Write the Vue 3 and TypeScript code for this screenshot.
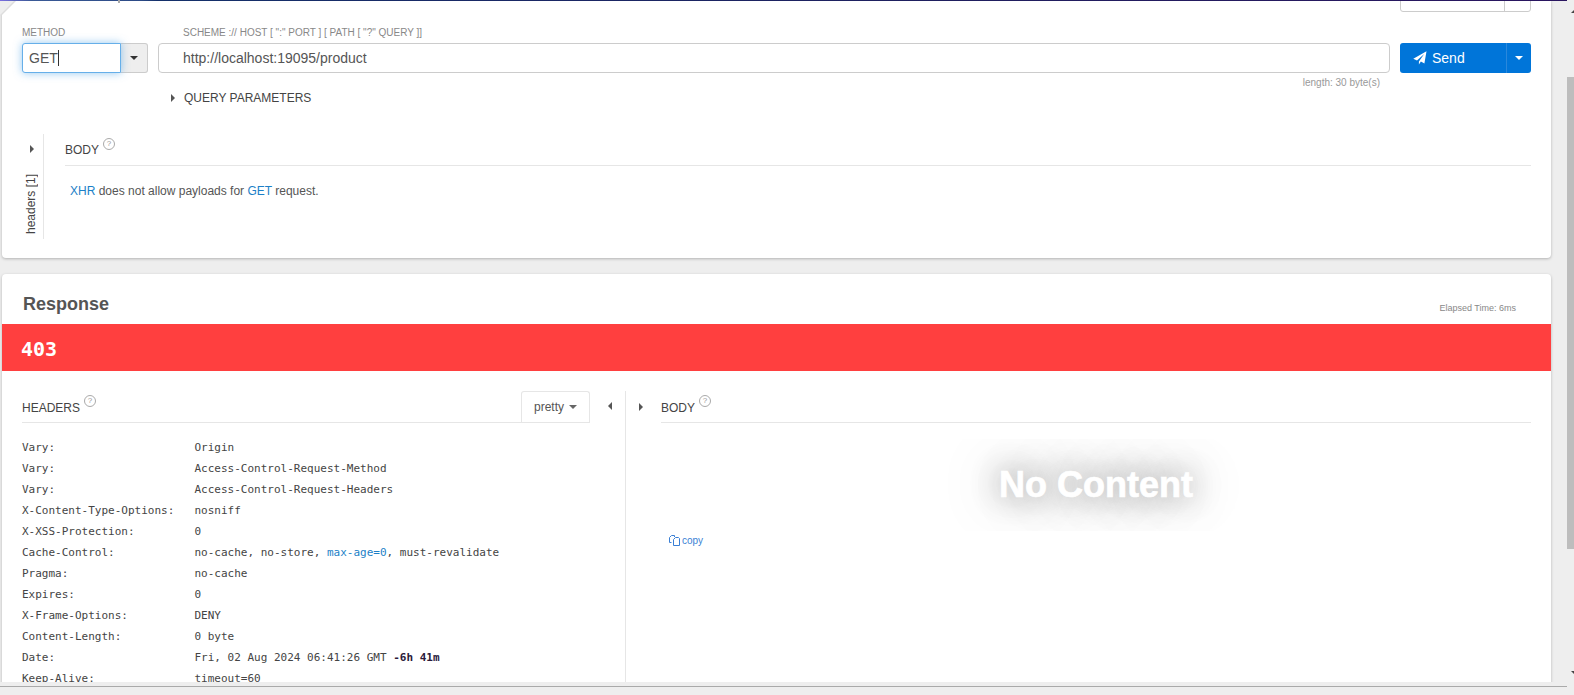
<script setup lang="ts">
interface Row { k: string; v: string }
const rows: Row[] = [
  { k: 'Vary:', v: 'Origin' },
  { k: 'Vary:', v: 'Access-Control-Request-Method' },
  { k: 'Vary:', v: 'Access-Control-Request-Headers' },
  { k: 'X-Content-Type-Options:', v: 'nosniff' },
  { k: 'X-XSS-Protection:', v: '0' },
  { k: 'Cache-Control:', v: 'cache' },
  { k: 'Pragma:', v: 'no-cache' },
  { k: 'Expires:', v: '0' },
  { k: 'X-Frame-Options:', v: 'DENY' },
  { k: 'Content-Length:', v: '0 byte' },
  { k: 'Date:', v: 'date' },
  { k: 'Keep-Alive:', v: 'timeout=60' },
]
</script>

<template>
  <div class="page">
    <div class="topline"><i class="tick"></i></div>
    <main class="stack">
      <section class="card request">
        <svg class="fold" width="18" height="18" viewBox="0 0 18 18"><path d="M0 0H16L0 16Z" fill="#eee"/><path d="M0.5 15.5 15.5 0.5" stroke="#ddd" stroke-width="1.5" fill="none"/></svg>
        <div class="saveas">
          <span class="save-main">Save as</span>
          <span class="save-side"></span>
        </div>
        <div class="url-row">
          <div class="method">
            <label class="lbl">METHOD</label>
            <div class="method-ctl">
              <div class="method-input">GET<i class="cursor"></i></div>
              <div class="method-btn"><i class="tri-down"></i></div>
            </div>
          </div>
          <div class="url">
            <label class="lbl url-lbl">SCHEME :// HOST [ ":" PORT ] [ PATH [ "?" QUERY ]]</label>
            <div class="url-input">http://localhost:19095/product</div>
            <div class="length">length: 30 byte(s)</div>
          </div>
          <div class="send">
            <div class="send-main">
              <svg class="plane" width="14" height="14" viewBox="0 0 14 14"><path d="M13.5.3 11.4 12.4 7.9 10.6 5.9 13.5V10.4L11.2 3 4 9.5.3 7.7Z" fill="#fff"/></svg>
              Send
            </div>
            <div class="send-side"><i class="tri-down white"></i></div>
          </div>
        </div>
        <div class="query"><i class="tri-right"></i>QUERY PARAMETERS</div>
        <div class="req-body">
          <div class="rail">
            <i class="tri-right big"></i>
            <span class="rail-text">headers [1]</span>
          </div>
          <div class="req-main">
            <div class="sec-title req-title">BODY<span class="help">?</span></div>
            <p class="xhr"><span class="blue">XHR</span> does not allow payloads for <span class="blue">GET</span> request.</p>
          </div>
        </div>
      </section>

      <section class="card response">
        <div class="res-head">
          <h2>Response</h2>
          <span class="elapsed">Elapsed Time: 6ms</span>
        </div>
        <div class="status">403</div>
        <div class="res-cols">
          <div class="res-left">
            <div class="left-head">
              <div class="sec-title low">HEADERS<span class="help">?</span></div>
              <div class="pretty">pretty<i class="tri-down gray"></i></div>
            </div>
            <div class="hrows">
              <div v-for="(r, i) in rows" :key="i" class="hrow">
                <span class="hk">{{ r.k }}</span>
                <span class="hv">
                  <template v-if="r.v === 'cache'">no-cache, no-store, <span class="blue">max-age=0</span>, must-revalidate</template>
                  <template v-else-if="r.v === 'date'">Fri, 02 Aug 2024 06:41:26 GMT <b class="ago">-6h 41m</b></template>
                  <template v-else>{{ r.v }}</template>
                </span>
              </div>
            </div>
          </div>
          <div class="collapse-l"><i class="tri-left"></i></div>
          <div class="res-right">
            <i class="tri-right big"></i>
            <div class="right-main">
              <div class="sec-title low right-title">BODY<span class="help">?</span></div>
              <div class="nocontent"><span>No Content</span></div>
              <div class="copy">
                <svg width="13" height="13" viewBox="0 0 13 13" fill="none" stroke="#3a7fd5" stroke-width="1"><path d="M3.5 8.5H1.5V3.5L3.5 1.5H6.5V3M5.5 11.5V5.5L7.5 3.5H10.5L11.5 4.5V11.5Z"/></svg>
                copy
              </div>
            </div>
          </div>
        </div>
      </section>
    </main>
    <div class="footer"></div>
    <div class="sbar">
      <i class="sb-up"></i>
      <i class="sb-thumb"></i>
      <i class="sb-down"></i>
    </div>
  </div>
</template>

<style>
html, body { margin: 0; background: #eee; overflow: hidden; }
</style>

<style scoped>
.page {
  width: 1574px; height: 695px; background: #eee; overflow: hidden; position: relative;
  display: flex; flex-direction: column;
  font-family: "Liberation Sans", Arial, sans-serif; color: #444;
}
.topline { height: 1px; background: linear-gradient(90deg, #7b6fe0 0, #3a5a96 2%, #2c4a86 9%, #14306a 10%, #1f1f5f 60%, #2a1560 100%); flex: none; position: relative; z-index: 3; }
.tick { position: absolute; left: 118px; top: 0; width: 2px; height: 3px; background: #aaa; }
.stack { flex: 1; min-height: 0; overflow: hidden; padding: 0 23px 0 2px; display: flex; flex-direction: column; gap: 16px; }
.card { background: #fff; box-shadow: 0 1px 3px rgba(0,0,0,.25); border-radius: 0 0 4px 4px; flex: none; }
.request { height: 257px; padding: 0 20px; position: relative; box-sizing: border-box; }
.fold { position: absolute; left: -2px; top: -1px; }
.saveas { position: absolute; right: 20px; top: -20px; width: 131px; height: 31px; box-sizing: border-box; border: 1px solid #ccc; border-radius: 3px; display: flex; }
.save-main { flex: 1; border-right: 1px solid #ccc; font-size: 14px; line-height: 29px; padding-left: 20px; color: #555; }
.save-side { width: 25px; }
.url-row { display: flex; padding-top: 26px; }
.lbl { display: block; font-size: 10px; color: #888; height: 16px; line-height: 12px; white-space: nowrap; }
.method { width: 136px; flex: none; }
.method-ctl { display: flex; height: 30px; }
.method-input {
  width: 99px; box-sizing: border-box; border: 1px solid #66afe9; border-radius: 3px 0 0 3px;
  box-shadow: 0 0 8px rgba(102,175,233,.7); font-size: 14px; line-height: 28px; padding-left: 6px; color: #555; background: #fff; position: relative;
}
.cursor { display: inline-block; width: 1px; height: 16px; background: #333; vertical-align: -3px; }
.method-btn { width: 27px; box-sizing: border-box; background: #eee; border: 1px solid #ccc; border-left: 0; border-radius: 0 3px 3px 0; display: flex; align-items: center; justify-content: center; }
.url { flex: 1; position: relative; }
.url-lbl { padding-left: 25px; }
.url-input { height: 30px; box-sizing: border-box; border: 1px solid #ccc; border-radius: 4px; padding-left: 24px; font-size: 14px; line-height: 28px; color: #555; margin-right: 10px; }
.length { font-size: 10px; line-height: 11px; color: #999; text-align: right; margin-right: 20px; margin-top: 4px; height: 12px; }
.send { width: 131px; flex: none; margin-top: 16px; height: 30px; display: flex; background: #0075d9; border-radius: 3px; color: #fff; font-size: 14px; }
.send-main { flex: 1; display: flex; align-items: center; padding-left: 13px; gap: 5px; }
.plane { flex: none; }
.send-side { width: 24px; border-left: 1px solid #2a88dc; display: flex; align-items: center; justify-content: center; }
i { display: inline-block; flex: none; }
.tri-down { width: 0; height: 0; border: 4px solid transparent; border-top-color: #333; border-bottom: 0; }
.tri-down.white { border-top-color: #fff; border-left-width: 4.5px; border-right-width: 4.5px; }
.tri-down.gray { border-top-color: #666; margin-left: 5px; vertical-align: 2px; }
.tri-right { width: 0; height: 0; border: 4px solid transparent; border-left-color: #555; border-right: 0; }
.tri-left { width: 0; height: 0; border: 4px solid transparent; border-right-color: #555; border-left: 0; }
.query { display: flex; align-items: center; margin-top: -1px; padding-left: 149px; font-size: 12px; color: #444; height: 20px; }
.query .tri-right { margin-right: 9px; border-width: 4px; border-right: 0; }
.req-body { display: flex; margin-top: 26px; }
.rail { width: 22px; height: 105px; box-sizing: border-box; border-right: 1px solid #e6e6e6; position: relative; flex: none; }
.big { border-width: 4.5px; border-right: 0; }
.rail .tri-right { position: absolute; left: 8px; top: 11px; }
.rail-text { position: absolute; left: 3px; bottom: 5px; writing-mode: vertical-rl; transform: rotate(180deg); font-size: 12px; color: #444; line-height: 13px; }
.req-main { flex: 1; padding-left: 21px; }
.sec-title { font-size: 12px; color: #444; height: 31px; line-height: 33px; box-sizing: border-box; }
.sec-title.low { line-height: 35px; }
.req-title, .right-title { border-bottom: 1px solid #e6e6e6; height: 32px; }
.help { display: inline-block; width: 10px; height: 10px; border: 1px solid #aaa; border-radius: 50%; font-size: 8px; line-height: 10px; text-align: center; color: #999; margin-left: 4px; vertical-align: 8px; }
.low .help { vertical-align: 9px; }
.xhr { margin: 18px 0 0 5px; font-size: 12px; line-height: 14px; color: #555; }
.blue { color: #1c7fc7; }
.res-head { height: 50px; box-sizing: border-box; padding: 11px 35px 0 21px; display: flex; align-items: center; justify-content: space-between; }
h2 { margin: 0; font-size: 18px; font-weight: bold; color: #555; }
.elapsed { font-size: 9px; color: #888; margin-top: 6px; }
.status { height: 47px; box-sizing: border-box; padding: 3px 0 0 19px; background: #ff3f3f; color: #fff; font: bold 20px/44px "DejaVu Sans Mono", monospace; }
.res-cols { display: flex; padding-top: 20px; align-items: flex-start; height: 400px; }
.response { position: relative; height: 500px; border-radius: 4px 4px 0 0; }
.res-left { width: 568px; margin-left: 20px; flex: none; }
.left-head { height: 31px; border-bottom: 1px solid #e6e6e6; display: flex; justify-content: space-between; }
.pretty { width: 69px; height: 31px; box-sizing: border-box; border: 1px solid #e6e6e6; border-bottom: 0; border-radius: 3px 3px 0 0; text-align: center; font-size: 12px; line-height: 31px; color: #555; }
.hrows { padding-top: 14px; }
.hrow { height: 21px; display: flex; font: 11px/21px "DejaVu Sans Mono", monospace; color: #444; white-space: nowrap; }
.hk { width: 172.5px; flex: none; }
.ago { color: #2a1a3a; }
.collapse-l { width: 35px; flex: none; height: 29px; display: flex; align-items: center; padding-left: 18px; box-sizing: border-box; }
.res-right { flex: 1; border-left: 1px solid #e6e6e6; height: 400px; display: flex; padding-right: 20px; }
.res-right > .tri-right { margin: 12px 0 0 13px; }
.right-main { flex: 1; margin-left: 18px; }
.nocontent { width: 304px; height: 92px; margin: 16px auto 0; overflow: hidden; text-align: center; }
.nocontent span { display: block; font: bold 36px/92px "Liberation Sans", sans-serif; color: #fff; -webkit-text-stroke: .7px #fff; text-shadow: 0 0 30px #888, 0 0 60px #999; }
.copy { display: flex; align-items: center; gap: 1px; font-size: 10px; color: #3a7fd5; margin: 1px 0 0 7px; height: 16px; }
.footer { height: 13px; flex: none; position: relative; }
.footer::before { content: ""; position: absolute; left: 0; right: 0; top: 4px; height: 1px; background: #aaa; }
.sbar { position: absolute; right: 0; top: 0; bottom: 0; width: 7px; background: #eee; z-index: 4; }
.sb-thumb { position: absolute; left: 0; right: 0; top: 77px; height: 472px; background: #bdbdbd; }
.sb-up { position: absolute; left: 4px; top: 9px; width: 0; height: 0; border: 4px solid transparent; border-bottom-color: #444; border-top: 0; }
.sb-down { position: absolute; left: 4px; top: 671px; width: 0; height: 0; border: 4px solid transparent; border-top-color: #444; border-bottom: 0; }
</style>
